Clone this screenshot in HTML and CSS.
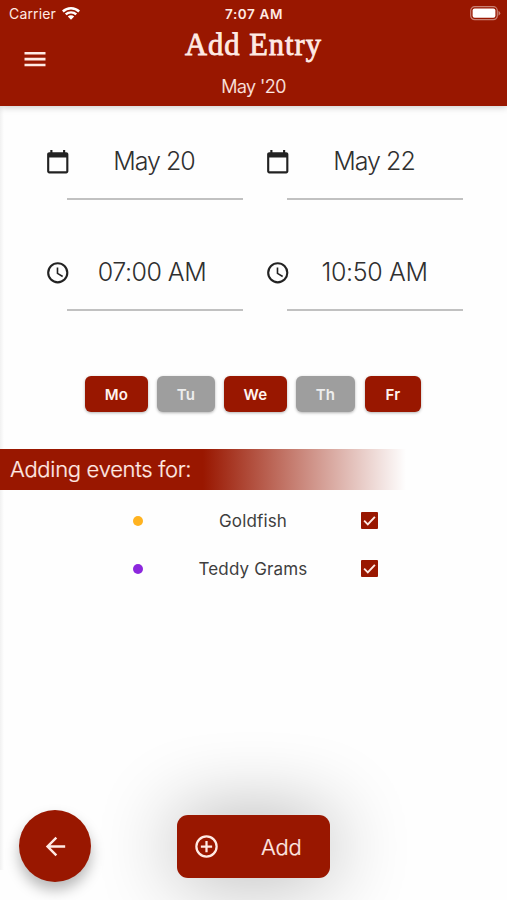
FILE: index.html
```html
<!DOCTYPE html>
<html lang="en">
<head>
<meta charset="utf-8">
<title>Add Entry</title>
<link rel="stylesheet" href="styles.css">
</head>
<body>
<div class="app">
  <header class="header">
    <div class="status">
      <div class="carrier"><span>Carrier</span>
        <svg class="wifi" viewBox="0 0 18 14"><path d="M0 4.600a13 13 0 0 1 18 0L16.300 6.400a10.500 10.500 0 0 0-14.600 0zM2.900 7.600a8.800 8.800 0 0 1 12.200 0L13.400 9.300a6.400 6.400 0 0 0-8.800 0zM5.800 10.500a4.600 4.600 0 0 1 6.400 0L9 13.700z"/></svg>
      </div>
      <span class="time">7:07 AM</span>
      <div class="battery-wrap"><svg class="battery" viewBox="0 0 31 15"><rect class="battery-case" x=".7" y=".7" width="26.600" height="13" rx="4"/><rect x="2.600" y="2.600" width="22.800" height="9.200" rx="2"/><path class="battery-tip" d="M28.500 4.700Q32 7.200 28.500 9.700z"/></svg></div>
    </div>
    <div class="toolbar">
      <svg class="menu" viewBox="0 0 24 24"><path d="M3 18.200h18v-2.200H3zM3 13.200h18v-2.200H3zM3 6v2.200h18V6z"/></svg>
      <div class="titles"><h1>Add Entry</h1><p>May '20</p></div>
    </div>
  </header>
  <main class="content">
    <section class="fields">
      <div class="field"><svg class="icon" viewBox="0 0 24 24"><path d="M20 3h-1V1h-2v2H7V1H5v2H4c-1.100 0-2 .9-2 2v16c0 1.100.9 2 2 2h16c1.100 0 2-.9 2-2V5c0-1.100-.9-2-2-2zm0 18H4V8h16v13z"/></svg><div class="value date">May 20</div></div>
      <div class="field"><svg class="icon" viewBox="0 0 24 24"><path d="M20 3h-1V1h-2v2H7V1H5v2H4c-1.100 0-2 .9-2 2v16c0 1.100.9 2 2 2h16c1.100 0 2-.9 2-2V5c0-1.100-.9-2-2-2zm0 18H4V8h16v13z"/></svg><div class="value date">May 22</div></div>
      <div class="field"><svg class="icon" viewBox="0 0 24 24"><path d="M12 2a10 10 0 1 0 0 20 10 10 0 0 0 0-20zm0 18a8 8 0 1 1 0-16 8 8 0 0 1 0 16zM12.500 7H11v6l5.250 3.150.75-1.230-4.500-2.670z"/></svg><div class="value clock start">07:00 AM</div></div>
      <div class="field"><svg class="icon" viewBox="0 0 24 24"><path d="M12 2a10 10 0 1 0 0 20 10 10 0 0 0 0-20zm0 18a8 8 0 1 1 0-16 8 8 0 0 1 0 16zM12.500 7H11v6l5.250 3.150.75-1.230-4.500-2.670z"/></svg><div class="value clock">10:50 AM</div></div>
    </section>
    <section class="days">
      <button class="day wide">Mo</button>
      <button class="day off">Tu</button>
      <button class="day wide">We</button>
      <button class="day off th">Th</button>
      <button class="day narrow">Fr</button>
    </section>
    <h2 class="banner">Adding events for:</h2>
    <section class="events">
      <div class="event"><span class="dot amber"></span><span class="name">Goldfish</span><svg class="check" viewBox="0 0 18 18"><rect width="18" height="18" rx="1"/><path d="M3.300 9.200l3.900 3.900 7.500-8"/></svg></div>
      <div class="event"><span class="dot purple"></span><span class="name">Teddy Grams</span><svg class="check" viewBox="0 0 18 18"><rect width="18" height="18" rx="1"/><path d="M3.300 9.200l3.900 3.900 7.500-8"/></svg></div>
    </section>
  </main>
  <footer class="actions">
    <button class="back" aria-label="Back"><svg viewBox="0 0 24 24"><path d="M20 11H7.830l5.590-5.590L12 4l-8 8 8 8 1.410-1.410L7.830 13H20z"/></svg></button>
    <button class="add"><svg viewBox="0 0 24 24"><path d="M13 7h-2v4H7v2h4v4h2v-4h4v-2h-4zM12 2a10 10 0 1 0 0 20 10 10 0 0 0 0-20zm0 18a8 8 0 1 1 0-16 8 8 0 0 1 0 16z"/></svg><span>Add</span></button>
  </footer>
</div>
</body>
</html>
```
FILE: styles.css
```css
* { box-sizing: border-box; }
body { margin: 0; background: #fefefe; font-family: Inter, "Liberation Sans", sans-serif; }
h1, h2, p { margin: 0; }
button { border: 0; padding: 0; font: inherit; color: #fff; background: #991700; }
.app { height: 900px; display: flex; flex-direction: column; overflow: hidden; background: linear-gradient(90deg, #f1f1f1, #fefefe 4px) 0 0 / 100% 870px no-repeat; }

.header { height: 106px; flex: none; background: #991700; color: #ffeae4; box-shadow: 0 1px 7px rgba(0,0,0,.22); z-index: 1; }
.status { height: 27px; display: grid; grid-template-columns: 1fr auto 1fr; align-items: center; padding: 0 6px 0 9px; }
.carrier { display: flex; align-items: center; gap: 6px; font-size: 14px; letter-spacing: .15px; }
.wifi { width: 18px; height: 14px; fill: #fff; margin-top: -1px; }
.time { font-size: 13.5px; font-weight: 600; letter-spacing: .6px; margin-left: -2px; }
.battery-wrap { display: flex; justify-content: flex-end; }
.battery { width: 31px; height: 15px; fill: #fff; }
.battery-case { fill: none; stroke: #c98174; stroke-width: 1.2; }
.battery-tip { fill: #c98174; }
.toolbar { height: 79px; display: grid; grid-template-columns: 72px 1fr 72px; }
.menu { width: 28px; height: 28px; margin: 18px 0 0 21px; fill: #ffeae4; }
.titles { text-align: center; }
h1 { font: 400 30.5px/36px "Liberation Serif", serif; letter-spacing: 1px; white-space: nowrap; -webkit-text-stroke: .8px #ffeae4; }
.titles p { font-size: 18px; font-weight: 300; line-height: 24px; margin-top: 12px; letter-spacing: -.55px; -webkit-text-stroke: .2px #ffeae4; }

.content { flex: 1; }
.fields { display: grid; grid-template-columns: 198px 198px; column-gap: 22px; row-gap: 43px; padding: 26px 0 0 45px; }
.field { height: 68px; display: grid; grid-template-columns: 22px 176px; }
.icon { width: 25.5px; height: 25.5px; margin-top: 17px; fill: #222; }
.value { border-bottom: 2px solid #c1c1c1; text-align: center; color: #303030; font-size: 25px; font-weight: 300; line-height: 59px; white-space: nowrap; }
.date { letter-spacing: -1px; padding-right: 2px; }
.clock { letter-spacing: -.35px; padding-right: 1px; }
.start { padding-right: 6px; letter-spacing: -.5px; }
.days { display: flex; height: 36px; margin: 65px 0 0 85px; gap: 9px; }
.day { width: 58px; border-radius: 6px; font-size: 15px; font-weight: 600; letter-spacing: .2px; color: #fff3ef; box-shadow: 0 1px 3px rgba(0,0,0,.3); }
.day.wide { width: 63px; }
.day.off { background: #9e9e9e; color: #eee; }
.day.th { width: 59px; }
.day.narrow { width: 56px; margin-left: 1px; }
.banner { width: 406px; height: 41px; margin-top: 37px; padding-left: 10px; background: linear-gradient(90deg, #991700 50%, rgba(153,23,0,0)); color: #ffeae4; font-size: 22px; font-weight: 300; line-height: 40px; letter-spacing: -.3px; -webkit-text-stroke: .2px #ffeae4; }
.events { padding-top: 6px; }
.event { height: 48px; display: grid; grid-template-columns: 10px 218px 17px; align-items: center; padding-left: 133px; }
.dot { width: 10px; height: 10px; border-radius: 50%; margin-top: 1px; }
.amber { background: #ffb320; }
.purple { background: #8c27dd; }
.name { padding: 2px 0 0 2px; text-align: center; font-size: 17px; letter-spacing: .15px; color: #3e3e3e; }
.check { width: 17px; height: 17px; fill: #991700; }
.check path { fill: none; stroke: #ffeae4; stroke-width: 2; }

.actions { height: 96px; display: flex; align-items: flex-start; padding: 6px 0 0 19px; }
.back { width: 72px; height: 72px; border-radius: 50%; display: grid; place-items: center; box-shadow: 0 8px 14px rgba(0,0,0,.28); z-index: 1; }
.back svg { width: 29px; height: 29px; fill: #ffeae4; }
.add { width: 153px; height: 63px; margin: 5px 0 0 86px; border-radius: 11px; display: flex; align-items: center; padding-left: 16px; box-shadow: 0 0 80px 0 rgba(0,0,0,.32); }
.add svg { width: 27px; height: 27px; fill: #ffeae4; }
.add span { margin-left: 41px; font-size: 22px; font-weight: 300; letter-spacing: -.2px; color: #ffeae4; -webkit-text-stroke: .2px #ffeae4; }
```
